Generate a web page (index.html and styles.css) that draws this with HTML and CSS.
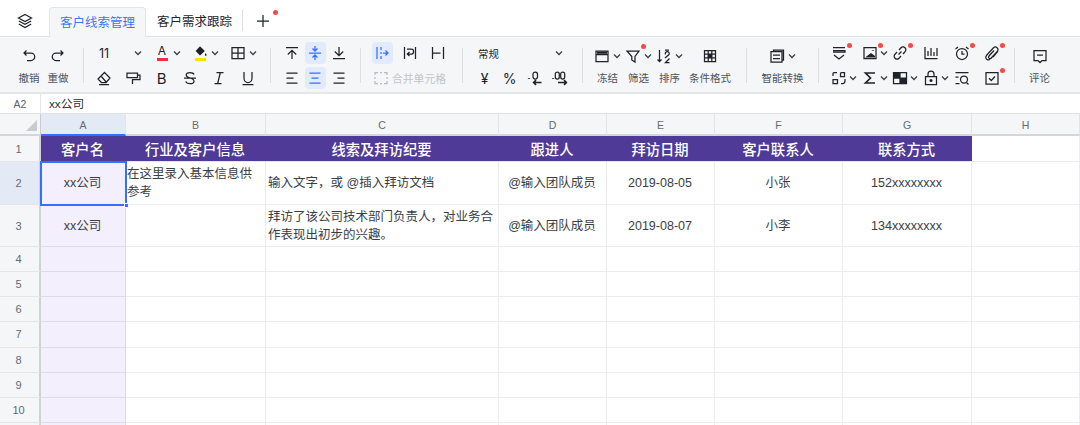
FILE: index.html
```html
<!DOCTYPE html>
<html lang="zh-CN">
<head>
<meta charset="utf-8">
<title>客户线索管理</title>
<link rel="stylesheet" href="styles.css">
</head>
<body>
<svg class="defs" aria-hidden="true">
  <symbol id="chev" viewBox="0 0 10 10"><path d="M2 3.500 5 6.500l3-3"/></symbol>
  <symbol id="layers" viewBox="0 0 16 16"><path d="M8 1.500 14.500 5 8 8.500 1.500 5Z M1.800 8 8 11.300 14.200 8 M1.800 11 8 14.500 14.200 11"/></symbol>
  <symbol id="plus" viewBox="0 0 16 16"><path d="M8 2v12M2 8h12"/></symbol>
  <symbol id="undo" viewBox="0 0 16 16"><path d="M5.500 2.500 3 5l2.500 2.500M3.200 5H10a3.500 3.500 0 0 1 0 7.500H6"/></symbol>
  <symbol id="redo" viewBox="0 0 16 16"><path d="M10.500 2.500 13 5l-2.500 2.500M12.800 5H6a3.500 3.500 0 0 0 0 7.500h4"/></symbol>
  <symbol id="eraser" viewBox="0 0 16 16"><path d="M8.500 2.500 14 8l-4 4.500H5.500L2 9ZM5 6l5.500 6.500M3 14.500h10"/></symbol>
  <symbol id="paint" viewBox="0 0 16 16"><path d="M2 3h10.500v4.500H2ZM12.500 5H15v4.500H7.500V14"/></symbol>
  <symbol id="strike" viewBox="0 0 16 16"><path d="M12 4.500C11.500 3 10 2.500 8 2.500 6 2.500 4.200 3.300 4.200 5c0 1.500 1.300 2.300 3.800 3 2.500.7 4 1.500 4 3.200 0 1.700-1.800 2.500-4 2.500-2 0-3.700-.8-4.200-2.300M2 8h12"/></symbol>
  <symbol id="italic" viewBox="0 0 16 16"><path d="M5.500 2.500h7M3.500 13.500h7M9.300 2.500 6.700 13.500"/></symbol>
  <symbol id="under" viewBox="0 0 16 16"><path d="M4 2v6.500a4 4 0 0 0 8 0V2M2.500 14.500h11"/></symbol>
  <symbol id="grid" viewBox="0 0 16 16"><path d="M2 2.500h12v11H2ZM8 2.500v11M2 8h12"/></symbol>
  <symbol id="vtop" viewBox="0 0 16 16"><path d="M2 2.500h12M8 14V5.500M3.800 9.500 8 5.300l4.200 4.200"/></symbol>
  <symbol id="vmid" viewBox="0 0 16 16"><path d="M2 8h12M8 1v4.500M5.500 3.500 8 6l2.500-2.500M8 15v-4.500M5.500 12.500 8 10l2.500 2.500"/></symbol>
  <symbol id="vbot" viewBox="0 0 16 16"><path d="M2 13.500h12M8 2v8.500M3.800 6.500 8 10.700l4.200-4.200"/></symbol>
  <symbol id="hleft" viewBox="0 0 16 16"><path d="M2.500 3h11M2.500 8h7M2.500 13h11"/></symbol>
  <symbol id="hmid" viewBox="0 0 16 16"><path d="M2.500 3h11M4.500 8h7M2.500 13h11"/></symbol>
  <symbol id="hright" viewBox="0 0 16 16"><path d="M2.500 3h11M6.500 8h7M2.500 13h11"/></symbol>
  <symbol id="overflow" viewBox="0 0 16 16"><path d="M3 2v12M7 2v3M7 7v2M7 11v3M9 8h5M11.500 5.500 14 8l-2.500 2.500"/></symbol>
  <symbol id="wrap" viewBox="0 0 16 16"><path d="M2.500 2v12M13.500 2v12M5 4h4.500a2 2 0 0 1 2 2v1a2 2 0 0 1-2 2H5.500M7.500 7 5.300 9l2.200 2"/></symbol>
  <symbol id="clip" viewBox="0 0 16 16"><path d="M2.500 2v12M13.500 2v12M2.500 8h8"/></symbol>
  <symbol id="merge" viewBox="0 0 16 16"><path d="M2 5V2.500h3M11 2.500h3V5M14 7v2M2 7v2M2 11v2.500h3M11 13.500h3V11M7 2.500h2M7 13.500h2"/></symbol>
  <symbol id="dec0" viewBox="0 0 16 16"><path class="thick" d="M2 8.200v.8"/><rect x="6" y="2" width="4.500" height="7" rx="2.200"/><path class="bold" d="M14.500 12.500H7M9 10.200 6.700 12.500 9 14.800"/></symbol>
  <symbol id="dec00" viewBox="0 0 16 16"><path class="thick" d="M1 8.200v.8"/><rect x="3.300" y="2" width="4" height="7" rx="2"/><rect x="8.700" y="2" width="4" height="7" rx="2"/><path class="bold" d="M6 12.500h8M12 10.200l2.300 2.300-2.300 2.300"/></symbol>
  <symbol id="freeze" viewBox="0 0 16 16"><path d="M2 3h12v10.500H2ZM2 6.500h12"/><path class="thick" d="M3 4.700h10"/></symbol>
  <symbol id="filter" viewBox="0 0 16 16"><path d="M2 3h12L10 8.500V14L6.800 12V8.500Z"/></symbol>
  <symbol id="sort" viewBox="0 0 16 16"><path d="M3.500 2v11.500M1.500 11.500l2 2 2-2M9 2h4M9.500 6.500a2 2 0 1 1 3.500 0L9 10M13.500 10.500 9.500 14.500h4"/></symbol>
  <symbol id="cond" viewBox="0 0 16 16"><path d="M2.500 2.500h11v11h-11ZM6.200 2.500v11M9.800 2.500v11M2.500 6.200h11M2.500 9.800h11"/><path class="thick" d="M7 7h2v2H7Z"/></symbol>
  <symbol id="smart" viewBox="0 0 16 16"><path d="M4.500 3.500V2H14.500v10H13M2 3.500h11V14H2ZM4 7h7M11 10.500H4"/></symbol>
  <symbol id="rowins" viewBox="0 0 16 16"><path d="M2 2.500h12M2 5.500h12v1.500H2M3 10l5 4 5-4"/></symbol>
  <symbol id="image" viewBox="0 0 16 16"><path d="M2 2.500h12v11H2Z"/><path class="solidp" d="M3 12.500 9 8l4 3v1.500Z"/><path class="thick" d="M11 5v.6"/></symbol>
  <symbol id="link" viewBox="0 0 16 16"><path d="M6.500 9.500 9.500 6.500M7 5l2-2.200a2.800 2.800 0 0 1 4 4L11 9M9 11l-2 2.200a2.800 2.800 0 0 1-4-4L5 7"/></symbol>
  <symbol id="chart" viewBox="0 0 16 16"><path d="M2 2v11.500h12.500M5 11V6M8 11V3M11 11V7M14 11V3"/></symbol>
  <symbol id="alarm" viewBox="0 0 16 16"><circle cx="8" cy="9" r="5.500"/><path d="M8 6v3.200h2.500M1.500 4 4 2M14.500 4 12 2"/></symbol>
  <symbol id="attach" viewBox="0 0 16 16"><path d="M6 14.500c-2 1-4 0-4.200-1.700-.2-1 .3-2 1-2.800l6.500-7c1-1 2.700-1.300 3.800-.3 1.200 1 1.200 2.700.2 3.800l-6 6.500c-.6.700-1.600.8-2.300.2-.6-.6-.6-1.500 0-2.200l5-5.500M14 6l-5 6"/></symbol>
  <symbol id="form" viewBox="0 0 16 16"><path d="M9.500 6.500v-3a1 1 0 0 1 1-1h3v4ZM6 2.500H3a1 1 0 0 0-1 1V6M2 9.500h4.500v4H2ZM14 9v2a2.500 2.500 0 0 1-2.500 2.500H10"/></symbol>
  <symbol id="sigma" viewBox="0 0 16 16"><path class="bold" d="M13 3H3.500l5 5-5 5H13"/></symbol>
  <symbol id="pivot" viewBox="0 0 16 16"><path d="M1.500 2.500h13v11h-13ZM8 2.500v11M1.500 8h13"/><path class="solidp" d="M1.500 2.500H8V8H1.500ZM8 8h6.500v5.500H8Z"/></symbol>
  <symbol id="lock" viewBox="0 0 16 16"><path d="M2.500 6.500h11v8h-11ZM5 6.500V4a3 3 0 0 1 6 0v2.500"/><circle class="solidp" cx="8" cy="10.500" r="1.500"/></symbol>
  <symbol id="find" viewBox="0 0 16 16"><path d="M1.500 2.500h13M1.500 7h3M1.500 13.500h4M12.500 12.500l2 2"/><circle cx="10" cy="9.500" r="3.500"/></symbol>
  <symbol id="check" viewBox="0 0 16 16"><path d="M2 2.500h12v11.500H2ZM5 8.200l2.300 2.300L11 6.500"/></symbol>
  <symbol id="comment" viewBox="0 0 16 16"><path d="M2 2.500h12v10h-4L8 14.500l-2-2H2ZM5 7h6"/></symbol>
</svg>

<header class="tabs">
  <svg class="ico tab-layers"><use href="#layers"/></svg>
  <div class="tab tab-active">客户线索管理</div>
  <div class="tab">客户需求跟踪</div>
  <span class="tab-sep"></span>
  <span class="tab-add"><svg class="ico"><use href="#plus"/></svg><i class="dot dot-plus"></i></span>
</header>

<section class="toolbar">
  <div class="group g-history stack">
    <div class="row"><span class="cell c29"><svg class="ico"><use href="#undo"/></svg></span><span class="cell c29"><svg class="ico"><use href="#redo"/></svg></span></div>
    <div class="row row-label"><span class="cell c29 label">撤销</span><span class="cell c29 label">重做</span></div>
  </div>
  <span class="sep"></span>
  <div class="group g-font">
    <div class="row row-font">
      <span class="select s-size"><span class="num">11</span><svg class="chev"><use href="#chev"/></svg></span>
      <span class="pair">
        <span class="ico swatch-ico"><span class="letter-a">A</span><i class="bar bar-red"></i></span>
        <svg class="chev"><use href="#chev"/></svg>
      </span>
      <span class="pair">
        <span class="ico swatch-ico"><svg class="fill-can" viewBox="0 0 16 12"><path class="solid" d="M8 .5 13.500 6 8 11 3 6Z"/><path class="solid" d="M14.500 8.500c.8 1 1 1.500 1 2a1 1 0 0 1-2 0c0-.5.2-1 1-2Z"/></svg><i class="bar bar-yellow"></i></span>
        <svg class="chev"><use href="#chev"/></svg>
      </span>
      <span class="pair"><svg class="ico"><use href="#grid"/></svg><svg class="chev"><use href="#chev"/></svg></span>
    </div>
    <div class="row">
      <span class="cell c286"><svg class="ico"><use href="#eraser"/></svg></span>
      <span class="cell c286"><svg class="ico"><use href="#paint"/></svg></span>
      <span class="cell c286 glyph">B</span>
      <span class="cell c286"><svg class="ico"><use href="#strike"/></svg></span>
      <span class="cell c286"><svg class="ico"><use href="#italic"/></svg></span>
      <span class="cell c286"><svg class="ico"><use href="#under"/></svg></span>
    </div>
  </div>
  <span class="sep"></span>
  <div class="group g-align">
    <div class="row">
      <span class="cell c235"><svg class="ico"><use href="#vtop"/></svg></span>
      <span class="cell c235"><span class="hl"><svg class="ico"><use href="#vmid"/></svg></span></span>
      <span class="cell c235"><svg class="ico"><use href="#vbot"/></svg></span>
    </div>
    <div class="row">
      <span class="cell c235"><svg class="ico"><use href="#hleft"/></svg></span>
      <span class="cell c235"><span class="hl"><svg class="ico"><use href="#hmid"/></svg></span></span>
      <span class="cell c235"><svg class="ico"><use href="#hright"/></svg></span>
    </div>
  </div>
  <span class="sep"></span>
  <div class="group g-wrap">
    <div class="row">
      <span class="cell c28"><span class="hl"><svg class="ico"><use href="#overflow"/></svg></span></span>
      <span class="cell c28"><svg class="ico"><use href="#wrap"/></svg></span>
      <span class="cell c28"><svg class="ico"><use href="#clip"/></svg></span>
    </div>
    <div class="row row-merge"><svg class="ico muted"><use href="#merge"/></svg><span class="merge-text">合并单元格</span></div>
  </div>
  <span class="sep"></span>
  <div class="group g-number">
    <div class="row"><span class="select s-fmt"><span class="fmt">常规</span><svg class="chev"><use href="#chev"/></svg></span></div>
    <div class="row">
      <span class="cell c25 numsym">¥</span>
      <span class="cell c25 numsym">%</span>
      <span class="cell c25"><svg class="ico"><use href="#dec0"/></svg></span>
      <span class="cell c25"><svg class="ico"><use href="#dec00"/></svg></span>
    </div>
  </div>
  <span class="sep"></span>
  <div class="group g-data stack">
    <div class="row">
      <span class="cell c31"><svg class="ico"><use href="#freeze"/></svg><svg class="chev"><use href="#chev"/></svg></span>
      <span class="cell c31"><svg class="ico"><use href="#filter"/></svg><svg class="chev"><use href="#chev"/></svg><i class="dot dot-filter"></i></span>
      <span class="cell c31"><svg class="ico"><use href="#sort"/></svg><svg class="chev"><use href="#chev"/></svg></span>
      <span class="cell c50"><svg class="ico"><use href="#cond"/></svg></span>
    </div>
    <div class="row row-label">
      <span class="cell c31 label">冻结</span><span class="cell c31 label">筛选</span><span class="cell c31 label">排序</span><span class="cell c50 label">条件格式</span>
    </div>
  </div>
  <span class="sep"></span>
  <div class="group g-smart stack">
    <div class="row"><span class="cell cfull"><svg class="ico"><use href="#smart"/></svg><svg class="chev"><use href="#chev"/></svg></span></div>
    <div class="row row-label"><span class="cell cfull label">智能转换</span></div>
  </div>
  <span class="sep"></span>
  <div class="group g-insert">
    <div class="row">
      <span class="slot"><svg class="ico"><use href="#rowins"/></svg><i class="dot dot-slot"></i></span>
      <span class="slot"><svg class="ico"><use href="#image"/></svg><svg class="chev"><use href="#chev"/></svg><i class="dot dot-slot"></i></span>
      <span class="slot"><svg class="ico"><use href="#link"/></svg><i class="dot dot-slot"></i></span>
      <span class="slot"><svg class="ico"><use href="#chart"/></svg></span>
      <span class="slot"><svg class="ico"><use href="#alarm"/></svg><i class="dot dot-slot"></i></span>
      <span class="slot"><svg class="ico"><use href="#attach"/></svg><i class="dot dot-slot"></i></span>
    </div>
    <div class="row">
      <span class="slot"><svg class="ico"><use href="#form"/></svg><svg class="chev"><use href="#chev"/></svg></span>
      <span class="slot"><svg class="ico"><use href="#sigma"/></svg><svg class="chev"><use href="#chev"/></svg></span>
      <span class="slot"><svg class="ico"><use href="#pivot"/></svg><svg class="chev"><use href="#chev"/></svg></span>
      <span class="slot"><svg class="ico"><use href="#lock"/></svg><svg class="chev"><use href="#chev"/></svg></span>
      <span class="slot"><svg class="ico"><use href="#find"/></svg></span>
      <span class="slot"><svg class="ico"><use href="#check"/></svg><i class="dot dot-slot"></i></span>
    </div>
  </div>
  <span class="sep"></span>
  <div class="group g-comment stack">
    <div class="row"><span class="cell cfull"><svg class="ico"><use href="#comment"/></svg></span></div>
    <div class="row row-label"><span class="cell cfull label">评论</span></div>
  </div>
</section>

<section class="formula">
  <div class="namebox">A2</div>
  <div class="fx">xx公司</div>
</section>

<main class="sheet">
  <div class="corner"><i class="corner-tri"></i></div>
  <div class="ch ch-on">A</div><div class="ch">B</div><div class="ch">C</div><div class="ch">D</div><div class="ch">E</div><div class="ch">F</div><div class="ch">G</div><div class="ch">H</div>

  <div class="rh">1</div>
  <div class="th th-a">客户名</div><div class="th">行业及客户信息</div><div class="th">线索及拜访纪要</div><div class="th">跟进人</div><div class="th">拜访日期</div><div class="th">客户联系人</div><div class="th">联系方式</div><div class="td"></div>

  <div class="rh rh-on">2</div>
  <div class="td tint center selected">xx公司<i class="handle"></i></div>
  <div class="td left lead-b">在这里录入基本信息供参考</div>
  <div class="td left">输入文字，或 @插入拜访文档</div>
  <div class="td center">@输入团队成员</div>
  <div class="td center">2019-08-05</div>
  <div class="td center">小张</div>
  <div class="td center">152xxxxxxxx</div>
  <div class="td"></div>

  <div class="rh">3</div>
  <div class="td tint center">xx公司</div>
  <div class="td left"></div>
  <div class="td left">拜访了该公司技术部门负责人，对业务合作表现出初步的兴趣。</div>
  <div class="td center">@输入团队成员</div>
  <div class="td center">2019-08-07</div>
  <div class="td center">小李</div>
  <div class="td center">134xxxxxxxx</div>
  <div class="td"></div>

  <div class="rh">4</div><div class="td tint"></div><div class="td"></div><div class="td"></div><div class="td"></div><div class="td"></div><div class="td"></div><div class="td"></div><div class="td"></div>
  <div class="rh">5</div><div class="td tint"></div><div class="td"></div><div class="td"></div><div class="td"></div><div class="td"></div><div class="td"></div><div class="td"></div><div class="td"></div>
  <div class="rh">6</div><div class="td tint"></div><div class="td"></div><div class="td"></div><div class="td"></div><div class="td"></div><div class="td"></div><div class="td"></div><div class="td"></div>
  <div class="rh">7</div><div class="td tint"></div><div class="td"></div><div class="td"></div><div class="td"></div><div class="td"></div><div class="td"></div><div class="td"></div><div class="td"></div>
  <div class="rh">8</div><div class="td tint"></div><div class="td"></div><div class="td"></div><div class="td"></div><div class="td"></div><div class="td"></div><div class="td"></div><div class="td"></div>
  <div class="rh">9</div><div class="td tint"></div><div class="td"></div><div class="td"></div><div class="td"></div><div class="td"></div><div class="td"></div><div class="td"></div><div class="td"></div>
  <div class="rh">10</div><div class="td tint"></div><div class="td"></div><div class="td"></div><div class="td"></div><div class="td"></div><div class="td"></div><div class="td"></div><div class="td"></div>
  <div class="rh"></div><div class="td tint"></div><div class="td"></div><div class="td"></div><div class="td"></div><div class="td"></div><div class="td"></div><div class="td"></div><div class="td"></div>
</main>
</body>
</html>
```

FILE: styles.css
```css
* { box-sizing: border-box; }
html, body { margin: 0; height: 425px; overflow: hidden; background: #fff; }
body { font-family: "Liberation Sans", "Noto Sans CJK SC", sans-serif; color: #1f2329; }
.defs { width: 0; height: 0; position: absolute; }
symbol path, symbol circle, symbol rect { fill: none; stroke: currentColor; stroke-width: 1.25; }

.ico { width: 16px; height: 16px; flex: none; display: block; position: relative; color: #1f2329; }
.chev { width: 10px; height: 10px; flex: none; margin-left: 2px; color: #3a3e44; }
symbol path.thick { stroke-width: 2.2; }
symbol path.bold { stroke-width: 1.7; }
symbol .solidp { fill: currentColor; stroke: none; }
.hl .ico { color: #3370ff; }

/* tabs */
.tabs { height: 37px; display: flex; align-items: flex-end; border-bottom: 1px solid #dfe1e5; padding-left: 17px; }
.tab-layers { margin: 0 16px 7px 0; }
.tab { height: 30px; font-size: 12.5px; line-height: 30px; padding: 0 12px; margin-bottom: -1px; color: #1f2329; white-space: nowrap; }
.tab-active { width: 97px; padding: 0 10px; background: #f5f6f8; border: 1px solid #e2e4e8; border-bottom: 0; border-radius: 4px 4px 0 0; color: #3f77f2; margin-right: -1px; }
.tab-sep { width: 1px; height: 21px; background: #dcdee2; margin: 0 0 5px -2px; }
.tab-add { position: relative; margin: 0 0 7px 12px; }
.dot { position: absolute; width: 5px; height: 5px; border-radius: 50%; background: #f54a45; }
.dot-plus { left: 18px; top: -3px; }
.dot-filter { left: 18px; top: -1px; }
.dot-slot { left: 16px; top: 1px; }

/* toolbar */
.toolbar { height: 57px; background: #f5f6f8; border-bottom: 2px solid #e4e6ea; display: flex; align-items: flex-start; }
.sep { flex: none; width: 1px; height: 35px; margin-top: 11px; background: #dcdee2; }
.group { flex: none; padding-top: 5px; display: flex; flex-direction: column; gap: 3px; }
.stack { padding-top: 8px; gap: 0; }
.row { display: flex; align-items: center; height: 22px; }
.row-label { margin-top: -1px; }
.cell { display: flex; align-items: center; justify-content: center; height: 22px; flex: none; position: relative; }
.c29 { width: 29px; }
.c286 { width: 28.7px; }
.c235 { width: 23.5px; }
.c28 { width: 28px; }
.c25 { width: 25px; }
.c31 { width: 31px; }
.c50 { width: 50px; }
.cfull { width: 100%; }
.label { font-size: 10.5px; color: #4e5258; white-space: nowrap; }
.g-history { width: 83px; padding-left: 14.5px; }
.g-font { width: 186px; padding-left: 6px; }
.row-font { padding-left: 9px; }
.select { display: flex; align-items: center; justify-content: space-between; flex: none; }
.s-size { width: 44px; }
.num { font-family: Inter, sans-serif; font-size: 12.5px; }
.pair { display: flex; align-items: center; width: 38px; flex: none; padding-left: 11px; margin-left: -11px; margin-right: 11px; }
.s-size + .pair { margin-left: 0; }
.swatch-ico { display: flex; flex-direction: column; align-items: center; height: 16px; }
.letter-a { font-family: Inter, sans-serif; font-size: 12px; line-height: 12px; color: #1f2329; }
.bar { display: block; width: 11px; height: 2.5px; margin-top: 1px; }
.bar-red { background: #e8323c; }
.bar-yellow { background: #f5e300; }
.fill-can { width: 14px; height: 12px; display: block; }
.solid { fill: #1f2329; }
.glyph { font-family: Inter, sans-serif; font-size: 15px; font-weight: 400; }
.g-align { width: 89px; padding-left: 9px; }
.hl { width: 21px; height: 22px; border-radius: 4px; background: #e1eaff; display: flex; align-items: center; justify-content: center; flex: none; }
.g-wrap { width: 101px; padding-left: 7px; }
.row-merge { padding-left: 5px; }
.merge-text { font-size: 10.8px; color: #c2c5ca; margin-left: 3px; white-space: nowrap; }
.muted { opacity: .28; }
.g-number { width: 119px; padding-left: 9px; }
.s-fmt { width: 92px; padding-left: 6px; }
.fmt { font-size: 10.5px; }
.numsym { font-family: Inter, sans-serif; font-size: 14px; }
.g-data { width: 163px; padding-left: 9px; }
.g-smart { width: 71px; }
.g-insert { width: 195px; padding-left: 12px; }
.slot { width: 30.7px; height: 22px; flex: none; display: flex; align-items: center; position: relative; }
.slot .chev { margin-left: 1px; }
.g-comment { width: 49px; }

/* formula bar */
.formula { height: 20px; display: flex; border-bottom: 1px solid #dfe1e5; }
.namebox { width: 41px; font-size: 10.5px; color: #5c6066; text-align: center; line-height: 20px; border-right: 1px solid #e2e4e8; }
.fx { padding-left: 8px; font-size: 11.7px; line-height: 20px; color: #2b2f36; }

/* sheet */
.sheet { height: 311px; overflow: hidden; display: grid; grid-template-columns: 41px 85px 140px 233px 108px 108px 128px 129px 108px; grid-template-rows: 22px 26px 43px 42px repeat(8, 25.15px); }
.corner, .ch { background: #f5f6f8; border-right: 1px solid #e2e4e8; border-bottom: 2px solid #d3d6db; }
.corner { position: relative; border-right-color: #c8cbd0; }
.corner-tri { position: absolute; right: 3px; bottom: 3px; width: 11px; height: 11px; background: #c8cbd0; clip-path: polygon(100% 0, 100% 100%, 0 100%); }
.ch { font-size: 10.5px; color: #646a73; text-align: center; line-height: 22px; }
.ch-on { background: #e3eaf6; border-bottom-color: #3370ff; }
.rh { background: #f5f6f8; border-right: 2px solid #cfd2d7; border-bottom: 1px solid #e5e6ea; font-size: 11px; color: #646a73; display: flex; align-items: center; justify-content: center; padding-right: 2px; }
.rh-on { background: #e3eaf6; }
.th { background: #4f3a97; color: #fff; font-size: 14.3px; font-weight: 500; display: flex; align-items: center; justify-content: center; border-bottom: 1px solid #e5e6ea; padding: 0 2px 1px 0; white-space: nowrap; }
.td { background: #fff; border-right: 1px solid #ebecef; border-bottom: 1px solid #ebecef; font-size: 12.5px; line-height: 18px; color: #3a3e44; display: flex; align-items: center; position: relative; }
.center { justify-content: center; text-align: center; padding-right: 1px; }
.left { padding: 0 2px; }
.lead-b { padding-left: 1px; }
.tint { background: #f3effc; border-right-color: #dcd5ee; border-bottom-color: #e0daee; }
.selected { outline: 2px solid #3370ff; outline-offset: -1px; z-index: 2; }
.handle { position: absolute; right: -4px; bottom: -4px; background: #3370ff; border: 1px solid #fff; box-sizing: content-box; width: 3px; height: 3px; }
```
